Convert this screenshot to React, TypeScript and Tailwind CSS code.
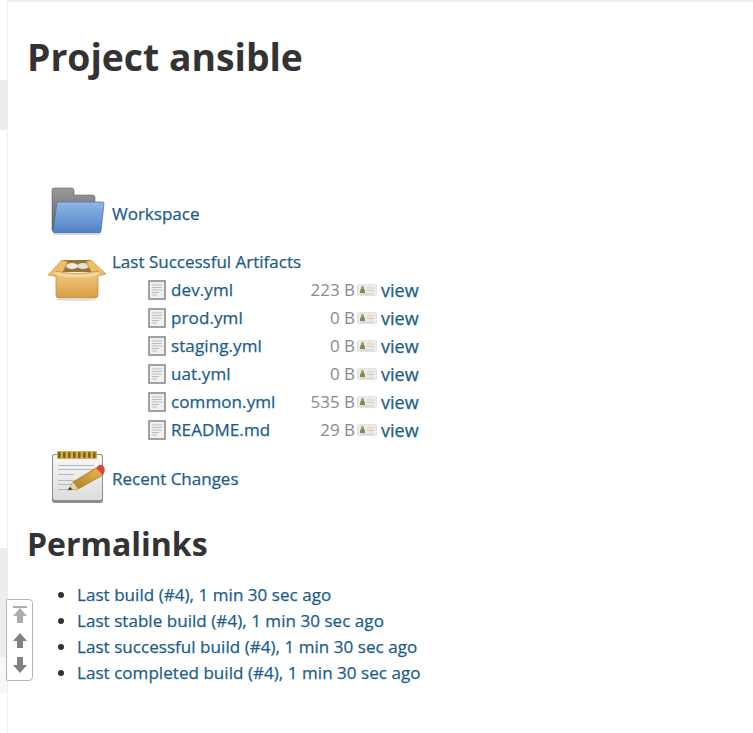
import React from "react";

const FONT = "font-['Open_Sans','Noto_Sans',sans-serif]";
const LINK = "text-[#1a5c8c] [-webkit-text-stroke:0.25px]";

function FolderIcon() {
  return (
    <svg width="56" height="50" viewBox="0 0 56 50" className="shrink-0">
      <defs>
        <linearGradient id="fb" x1="0" y1="0" x2="0" y2="1"><stop offset="0" stopColor="#8fb6e6" /><stop offset="1" stopColor="#4f82c4" /></linearGradient>
        <linearGradient id="fg" x1="0" y1="0" x2="0" y2="1"><stop offset="0" stopColor="#9a9a9a" /><stop offset="1" stopColor="#5a5a5a" /></linearGradient>
      </defs>
      <path d="M3 4q0-2 2-2h18q2 0 2 3v4h18q3 0 3 2v8H8L6 46q-3 0-3-3z" fill="url(#fg)" stroke="#6a6a6a" strokeWidth=".6" />
      <path d="M8 16h45q2 0 2 1l-3 28q0 2-3 2H6q-2 0-2-1z" fill="url(#fb)" stroke="#4a78b5" strokeWidth=".8" />
      <rect x="5" y="47" width="46" height="2" fill="#d4d4d4" />
    </svg>
  );
}

function BoxIcon() {
  return (
    <svg width="60" height="42" viewBox="0 0 60 42" className="shrink-0">
      <defs>
        <linearGradient id="bx" x1="0" y1="0" x2="0" y2="1"><stop offset="0" stopColor="#f0cb86" /><stop offset="1" stopColor="#d99f45" /></linearGradient>
      </defs>
      <path d="M17 1h26l7 12H10z" fill="#9a7436" />
      <ellipse cx="25" cy="7" rx="6" ry="3" fill="#efece4" />
      <ellipse cx="36" cy="7" rx="6" ry="3" fill="#e4e0d6" />
      <path d="M15 1 L1 16 L13 18 L21 3z" fill="#eebd66" stroke="#b9873a" strokeWidth=".6" />
      <path d="M44 1 L59 15 L47 18 L39 3z" fill="#eebd66" stroke="#b9873a" strokeWidth=".6" />
      <path d="M9 12q20 5 42 0v24q0 3-3 3H12q-3 0-3-3z" fill="url(#bx)" stroke="#b9873a" strokeWidth=".7" />
      <path d="M8 13q22 5 44 0v3q-22 5-44 0z" fill="#f5d59a" />
      <ellipse cx="30" cy="40.5" rx="21" ry="1.4" fill="#ddd" />
    </svg>
  );
}

function NotepadIcon() {
  return (
    <svg width="58" height="56" viewBox="0 0 58 56" className="shrink-0">
      <defs>
        <linearGradient id="pad" x1="0" y1="0" x2="0" y2="1"><stop offset="0" stopColor="#f8f8f8" /><stop offset="1" stopColor="#dcdcdc" /></linearGradient>
        <linearGradient id="pen" x1="0" y1="1" x2="1" y2="0"><stop offset="0" stopColor="#a8772a" /><stop offset="1" stopColor="#eeb944" /></linearGradient>
      </defs>
      <rect x="3" y="3" width="51" height="49" rx="3" fill="#8c8c8c" />
      <rect x="4" y="4" width="49" height="45" rx="2" fill="url(#pad)" />
      <rect x="8" y="0" width="40" height="8" rx="1" fill="#d6ac49" />
      {[10, 15, 20, 25, 30, 35, 40, 45].map((x) => (
        <rect key={x} x={x - 1} y="1" width="2.6" height="6" rx="1.2" fill="#7c5f1e" />
      ))}
      {[14, 18, 23, 29, 33, 38].map((y, i) => (
        <rect key={y} x="9" y={y} width={i === 2 ? 16 : i > 2 ? 16 : 36} height="1" fill="#b4bac1" />
      ))}
      <path d="M47 17l7 7-25 14-10 1 5-8z" fill="url(#pen)" stroke="#8a6420" strokeWidth=".6" />
      <path d="M47 17l3-3q3-1 5 2t-1 8z" fill="#d9443b" />
      <path d="M24 31l5 7-10 1z" fill="#e7d3a8" />
      <path d="M21 36l2.5 2.5-4.5.5z" fill="#333" />
    </svg>
  );
}

function FileIcon() {
  return (
    <svg width="18" height="20" viewBox="0 0 18 20" className="shrink-0">
      <rect x="1" y="1" width="16" height="18" fill="#f0f0f0" stroke="#8c8c8c" strokeWidth="1.6" />
      <path d="M4 5h10M4 7.5h10M4 10h10M4 12.5h7M4 15h5" stroke="#bdbdbd" strokeWidth="1" />
    </svg>
  );
}

function FingerprintIcon() {
  return (
    <svg width="20" height="14" viewBox="0 0 20 14" className="shrink-0">
      <rect x="0.5" y="1.5" width="19" height="11" rx="1" fill="#ececec" stroke="#e2e2e2" />
      <path d="M3 10q0-5 2.5-5T8 10z" fill="#8a8440" />
      <circle cx="5.5" cy="4.5" r="1.4" fill="#a89a4a" />
      <path d="M10 5h7M10 7.5h7M3 11h14" stroke="#cccccc" strokeWidth="1" />
    </svg>
  );
}

function Arrow({ kind }: { kind: "top" | "up" | "down" }) {
  const color = kind === "top" ? "#adadad" : "#808080";
  return (
    <svg width="16" height="18" viewBox="0 0 16 18">
      {kind === "top" && <rect x="1" y="0" width="14" height="2" fill={color} />}
      {kind === "down" ? (
        <path d="M5 1h6v8h4l-7 8-7-8h4z" fill={color} />
      ) : (
        <path d="M8 2l7 8h-4v7H5v-7H1z" fill={color} />
      )}
    </svg>
  );
}

const artifacts = [
  ["dev.yml", "223 B"],
  ["prod.yml", "0 B"],
  ["staging.yml", "0 B"],
  ["uat.yml", "0 B"],
  ["common.yml", "535 B"],
  ["README.md", "29 B"],
];

const permalinks = [
  "Last build (#4), 1 min 30 sec ago",
  "Last stable build (#4), 1 min 30 sec ago",
  "Last successful build (#4), 1 min 30 sec ago",
  "Last completed build (#4), 1 min 30 sec ago",
];

export default function App() {
  return (
    <div className={`${FONT} relative h-[733px] w-[753px] overflow-hidden bg-white flex`}>
      <aside className="w-[8px] shrink-0 flex flex-col border-r border-[#eeeeee]">
        <div className="h-[80px]" />
        <div className="h-[50px] bg-[#e9edf0]" />
        <div className="h-[418px]" />
        <div className="h-[109px] bg-[#e9edf0]" />
        <div className="h-[36px] bg-[#f6f7f8]" />
      </aside>
      <main className="flex-1 pl-[19px] border-t-2 border-[#f2f2f2]">
        <h1 className="mt-[31px] text-[37.3px] leading-[48px] font-bold text-[#333333]">Project ansible</h1>

        <div className="mt-[105px] flex flex-col text-[17px] leading-[28px]">
          <div className="flex items-start h-[48px] pl-[22px] gap-[7px]">
            <FolderIcon />
            <span className={`${LINK} mt-[14px]`}>Workspace</span>
          </div>

          <div className="flex pl-[20px] mt-[14px]">
            <div className="w-[60px] shrink-0 pt-[11px]"><BoxIcon /></div>
            <div className="pl-[5px]">
              <div className={`${LINK} h-[28px]`}>Last Successful Artifacts</div>
              {artifacts.map(([name, size]) => (
                <div key={name} className="flex items-center h-[28px]">
                  <div className="ml-[36px] w-[145px] flex items-center gap-[5px]">
                    <FileIcon />
                    <span className={`${LINK} tracking-[0.1px]`}>{name}</span>
                  </div>
                  <span className="w-[62px] text-right text-[#8a8a8a]">{size}</span>
                  <span className="ml-[2px]"><FingerprintIcon /></span>
                  <span className={`${LINK} ml-[4px] mb-[1px] text-[18px]`}>view</span>
                </div>
              ))}
            </div>
          </div>

          <div className="flex items-center h-[56px] mt-[7px] pl-[22px] gap-[5px]">
            <NotepadIcon />
            <span className={LINK}>Recent Changes</span>
          </div>
        </div>

        <h2 className="mt-[15px] text-[32px] leading-[44px] font-bold text-[#333333]">Permalinks</h2>

        <ul className="mt-[16px] list-disc pl-[50px] text-[17px] leading-[26px] tracking-[0.05px] marker:text-[#333333]">
          {permalinks.map((p) => (
            <li key={p}><span className={LINK}>{p}</span></li>
          ))}
        </ul>
      </main>

      <div className="absolute left-[6px] top-[599px] w-[27px] h-[82px] flex flex-col items-center justify-between py-[6px] bg-white border border-[#b5b5b5] rounded-r-[4px] rounded-l-[2px]">
        <Arrow kind="top" />
        <Arrow kind="up" />
        <Arrow kind="down" />
      </div>
    </div>
  );
}
